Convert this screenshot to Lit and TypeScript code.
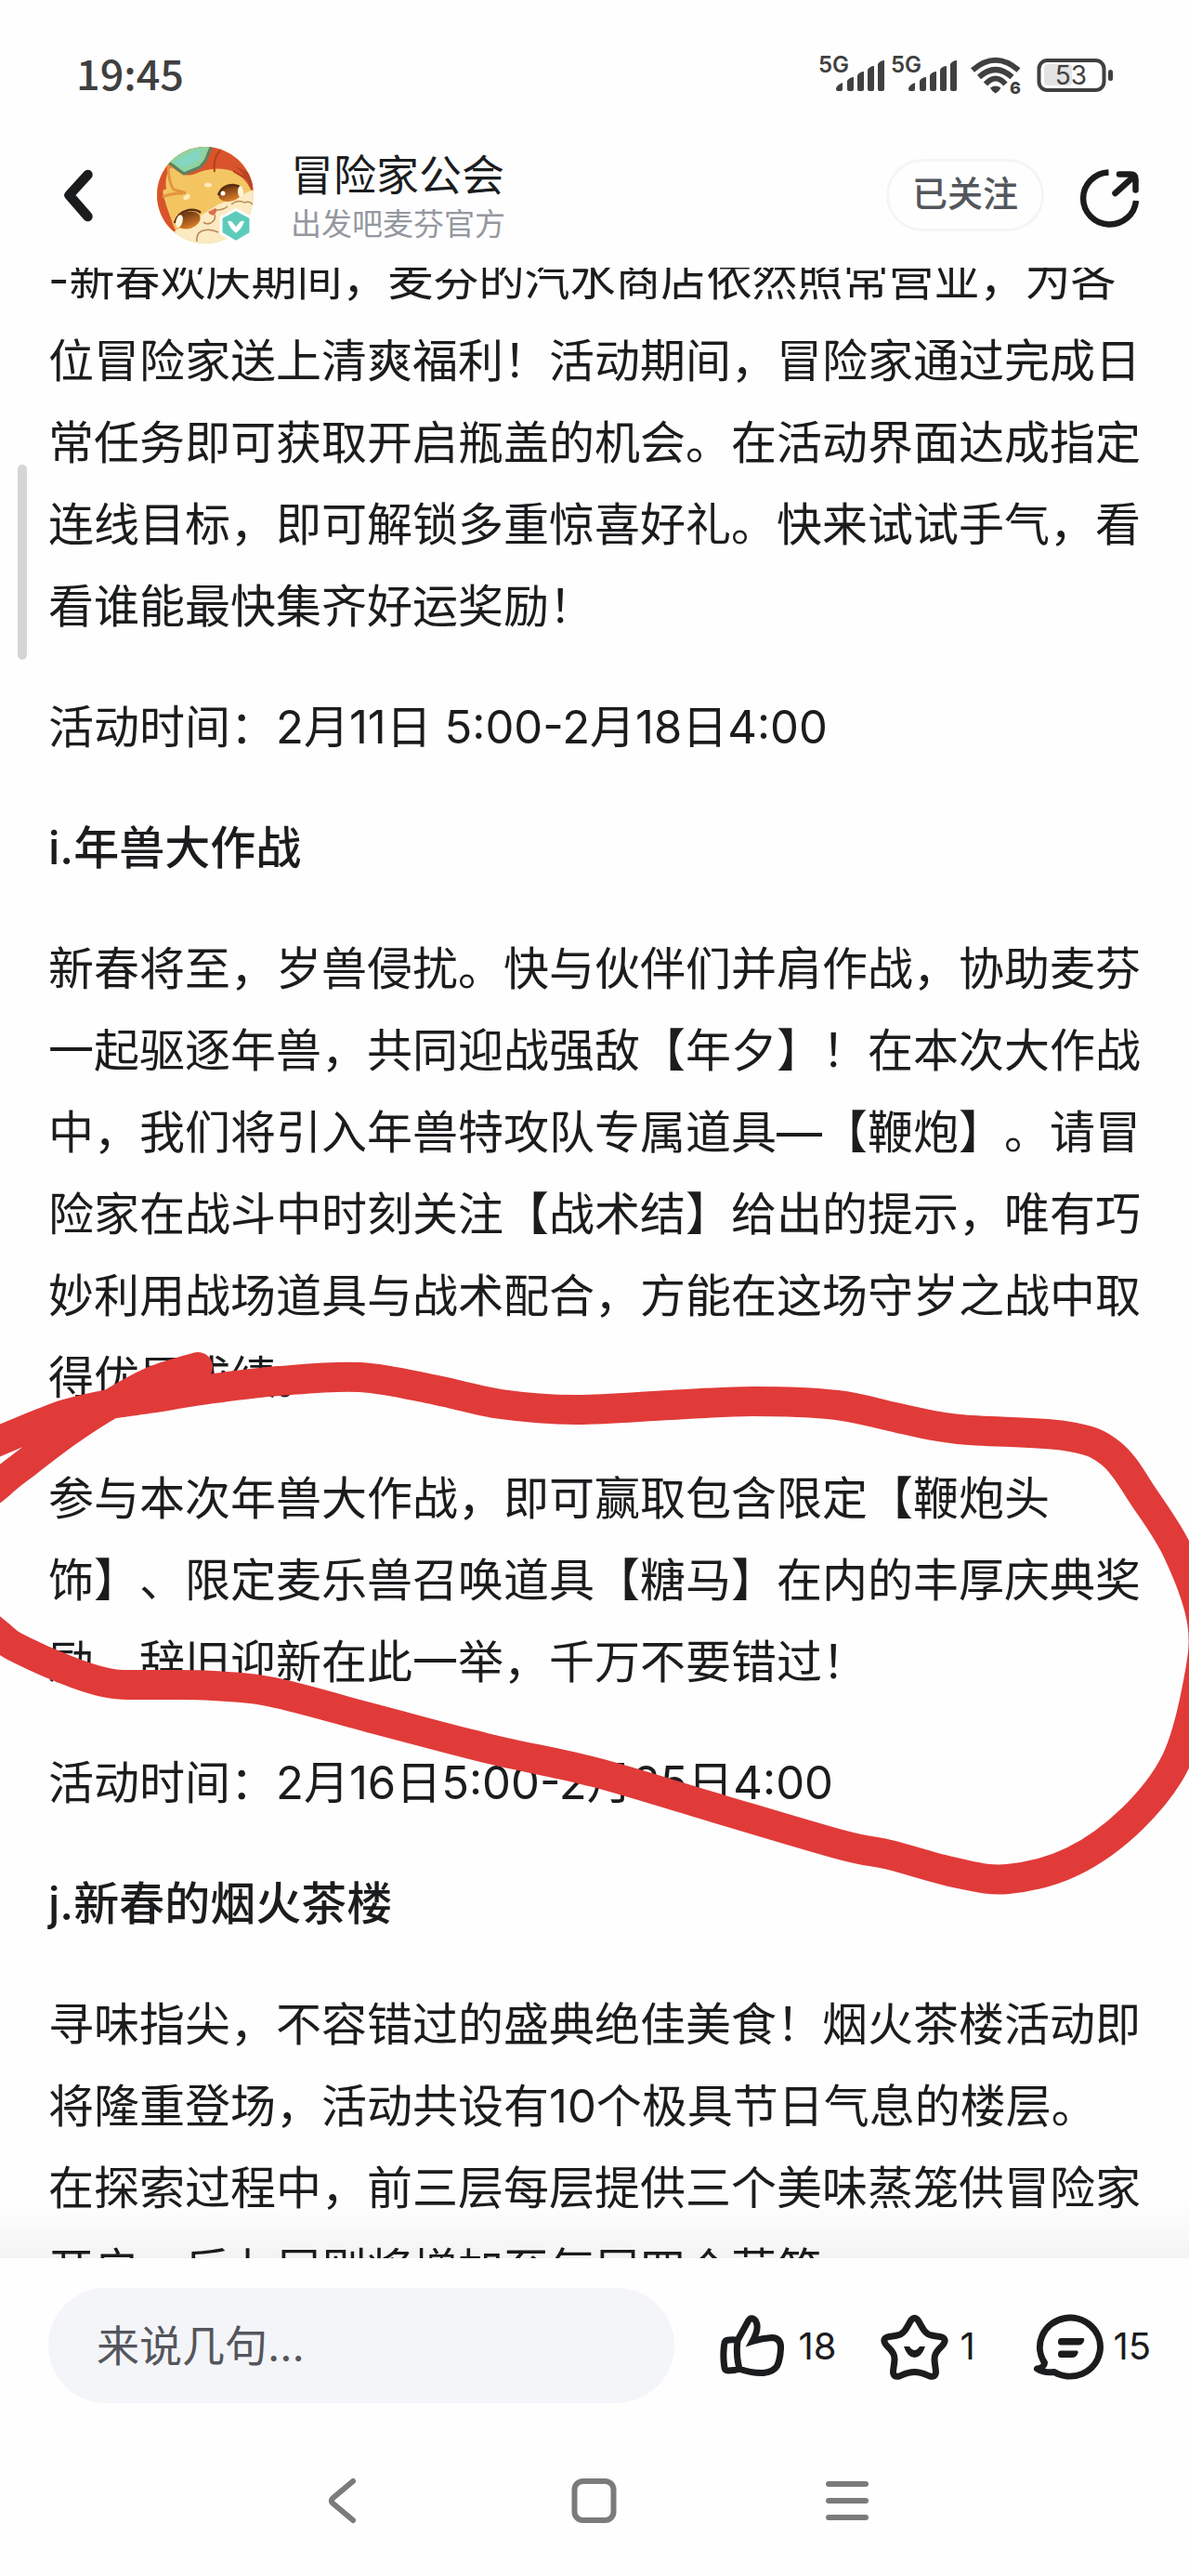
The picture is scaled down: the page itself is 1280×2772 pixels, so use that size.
import { LitElement, html, css, svg } from "lit";
import { customElement, property } from "lit/decorators.js";

interface Block {
  kind: "text" | "title";
  text: string;
}

const ARTICLE: Block[] = [
  {
    kind: "text",
    text: "-新春欢庆期间，麦芬的汽水商店依然照常营业，为各位冒险家送上清爽福利！活动期间，冒险家通过完成日常任务即可获取开启瓶盖的机会。在活动界面达成指定连线目标，即可解锁多重惊喜好礼。快来试试手气，看看谁能最快集齐好运奖励！",
  },
  { kind: "text", text: "活动时间：2月11日 5:00-2月18日4:00" },
  { kind: "title", text: "i.年兽大作战" },
  {
    kind: "text",
    text: "新春将至，岁兽侵扰。快与伙伴们并肩作战，协助麦芬一起驱逐年兽，共同迎战强敌【年夕】！在本次大作战中，我们将引入年兽特攻队专属道具—【鞭炮】。请冒险家在战斗中时刻关注【战术结】给出的提示，唯有巧妙利用战场道具与战术配合，方能在这场守岁之战中取得优异成绩。",
  },
  {
    kind: "text",
    text: "参与本次年兽大作战，即可赢取包含限定【鞭炮头饰】、限定麦乐兽召唤道具【糖马】在内的丰厚庆典奖励。辞旧迎新在此一举，千万不要错过！",
  },
  { kind: "text", text: "活动时间：2月16日5:00-2月25日4:00" },
  { kind: "title", text: "j.新春的烟火茶楼" },
  {
    kind: "text",
    text: "寻味指尖，不容错过的盛典绝佳美食！烟火茶楼活动即将隆重登场，活动共设有10个极具节日气息的楼层。在探索过程中，前三层每层提供三个美味蒸笼供冒险家开启，后七层则将增加至每层四个蒸笼。",
  },
];

type Point = [number, number];

/* Centre line of the hand-drawn marker loop. */
const MARKER: Point[] = [
  [213, 1471], [163, 1487], [112, 1515], [71, 1542], [30, 1573], [0, 1597], [-40, 1640],
  [-30, 1725], [0, 1760], [24, 1776], [82, 1801], [122, 1812], [170, 1813],
  [229, 1814], [294, 1821], [408, 1851], [527, 1882], [640, 1907], [762, 1943],
  [905, 1985], [958, 1996], [1028, 2015], [1085, 2022], [1155, 2003], [1219, 1957],
  [1266, 1895], [1290, 1810], [1294, 1745], [1268, 1670], [1232, 1612], [1196, 1564],
  [1146, 1545], [1032, 1538], [967, 1526], [901, 1512], [811, 1508], [722, 1512],
  [620, 1517], [539, 1511], [470, 1496], [388, 1482], [300, 1486], [231, 1494],
  [160, 1505], [113, 1512], [74, 1521], [46, 1531], [0, 1550], [-35, 1566],
];

/* Smooths a list of points into cubic segments. */
function smooth(points: Point[]): string {
  let d = `M${points[0][0]} ${points[0][1]}`;
  for (let i = 0; i < points.length - 1; i++) {
    const a = points[Math.max(i - 1, 0)];
    const b = points[i];
    const c = points[i + 1];
    const e = points[Math.min(i + 2, points.length - 1)];
    d += ` C${b[0] + (c[0] - a[0]) / 6} ${b[1] + (c[1] - a[1]) / 6} ${c[0] - (e[0] - b[0]) / 6} ${c[1] - (e[1] - b[1]) / 6} ${c[0]} ${c[1]}`;
  }
  return d;
}

const signal = html`<svg width="70" height="52" viewBox="0 0 70 52" aria-hidden="true">
  <text class="net" x="-1" y="23">5G</text>
  <path
    fill="#404040"
    d="M18 40c1-3 4-5 7-6v7q0 2-2 2h-3q-2 0-2-2zM30 32c1-2 4-4 7-4v13q0 2-2 2h-3q-2 0-2-2zM41 26c1-2 4-4 7-4v19q0 2-2 2h-3q-2 0-2-2zM52 20c1-2 4-4 7-4v25q0 2-2 2h-3q-2 0-2-2zM63 14c1-2 4-4 7-4v31q0 2-2 2h-3q-2 0-2-2z"
  />
</svg>`;

@customElement("status-bar")
class StatusBar extends LitElement {
  static styles = css`
    :host {
      display: flex;
      align-items: center;
      justify-content: space-between;
      box-sizing: border-box;
      height: 132px;
      padding: 30px 82px 0;
      color: #404040;
    }
    .time {
      padding-bottom: 6px;
      font-size: 45px;
      line-height: 52px;
      font-weight: 500;
      font-family: "Noto Sans CJK SC", sans-serif;
    }
    .icons {
      display: flex;
      align-items: center;
      gap: 8px;
    }
    svg {
      display: block;
      overflow: visible;
    }
    .net {
      font: 600 24px Inter, sans-serif;
      fill: #404040;
    }
    .gen {
      font: 800 18px Inter, sans-serif;
      fill: #404040;
    }
    .charge {
      font: 400 28px Inter, sans-serif;
      fill: #404040;
      text-anchor: middle;
    }
  `;
  render() {
    return html`
      <span class="time">19:45</span>
      <div class="icons">
        ${signal} ${signal}
        <svg width="70" height="52" viewBox="-2 0 70 52" aria-hidden="true">
          <g fill="none" stroke="#404040" stroke-width="6">
            <path d="M7 20.500Q31.700 -1 56.500 20.500" />
            <path d="M14 28Q31.700 12 49.500 28" />
            <path d="M21 35.500Q31.700 23.500 42.500 35.500" />
          </g>
          <path fill="#404040" d="M26 39.500Q31.700 35.500 37.500 39.500Q36 43 31.700 45.500Q27.500 43 26 39.500z" />
          <text class="gen" x="47" y="46">6</text>
        </svg>
        <svg width="82" height="52" viewBox="0 0 82 52" aria-hidden="true">
          <rect x="8" y="14" width="30" height="23" rx="4" fill="#e3e3e3" />
          <rect x="2.500" y="10" width="70" height="32" rx="9" fill="none" stroke="#404040" stroke-width="4" />
          <rect x="77" y="20" width="5" height="12" rx="2.500" fill="#404040" />
          <text class="charge" x="37" y="36">53</text>
        </svg>
      </div>
    `;
  }
}

@customElement("author-bar")
class AuthorBar extends LitElement {
  static styles = css`
    :host {
      display: flex;
      align-items: center;
      box-sizing: border-box;
      height: 156px;
      padding: 0 52px;
    }
    button {
      display: block;
      padding: 0;
      border: 0;
      background: none;
      font-family: inherit;
      cursor: pointer;
    }
    svg {
      display: block;
    }
    .avatar {
      margin: 0 40px 0 53px;
    }
    .who {
      flex: 1;
      min-width: 0;
      padding-top: 2px;
    }
    .name {
      margin: 0;
      font-size: 46px;
      line-height: 60px;
      font-weight: 400;
      color: #1b1c1e;
    }
    .owner {
      margin: 0;
      font-size: 33px;
      line-height: 46px;
      color: #94989f;
    }
    .follow {
      height: 78px;
      padding: 0 25px 4px;
      margin-right: 36px;
      border: 3px solid #f3f5f7;
      border-radius: 39px;
      font-size: 38px;
      line-height: 1;
      font-weight: 500;
      color: #54565d;
    }
  `;
  render() {
    return html`
      <button aria-label="返回">
        <svg width="64" height="64" viewBox="0 0 64 64">
          <path d="M42.500 10L22.500 32L42.500 55" fill="none" stroke="#1b1c1e" stroke-width="10.500" stroke-linecap="round" stroke-linejoin="round" />
        </svg>
      </button>
      <svg class="avatar" width="104" height="104" viewBox="0 0 104 104" aria-hidden="true">
        <defs>
          <clipPath id="disc"><circle cx="52" cy="52" r="52" /></clipPath>
          <linearGradient id="iris" x1="0" y1="0" x2="0" y2="1">
            <stop offset="0" stop-color="#6b3312" />
            <stop offset="1" stop-color="#dc8128" />
          </linearGradient>
        </defs>
        <g clip-path="url(#disc)">
          <rect width="104" height="104" fill="#f3c663" />
          <path d="M0 0H104V52Q98 36 84 27Q66 20 46 27Q32 34 22 27L14 22Q8 32 10 46Q4 44 8 56Q12 72 22 92L0 104z" fill="#d9542b" />
          <path d="M62 27Q60 12 68 4M82 26Q88 30 104 38V20Q92 8 76 2" fill="none" stroke="#b53f20" stroke-width="2" />
          <path d="M82 20Q94 26 102 48L104 30z" fill="#b84424" />
          <path d="M12 18Q24 30 28 50Q18 52 8 50Q14 55 14 60Q12 76 22 94L52 70V34Q34 36 22 26Q16 22 12 18z" fill="#f4c461" />
          <path d="M12 18Q12 38 18 46Q26 48 31 50M6 54Q14 50 28 50" fill="none" stroke="#e39540" stroke-width="3" />
          <path d="M11 16L20 -2H59L52 15L46 22L29 29L17 20z" fill="#8fd3a2" stroke="#5d8060" stroke-width="3" />
          <path d="M18 16L47 2L45 14L29 22z" fill="#82d6c3" />
          <path d="M104 46L66 62L50 72L14 94V104H104z" fill="#fbeac2" />
          <ellipse cx="79" cy="50" rx="13" ry="8.500" transform="rotate(-18 79 50)" fill="url(#iris)" />
          <path d="M66 52Q70 41 82 41Q90 42 92 46" fill="none" stroke="#5c2d12" stroke-width="2.500" />
          <ellipse cx="90" cy="48" rx="3" ry="6" fill="#fff6dd" />
          <circle cx="71" cy="50" r="2.500" fill="#fff" />
          <ellipse cx="34" cy="79" rx="13" ry="9" transform="rotate(-20 34 79)" fill="url(#iris)" />
          <path d="M19 82Q22 71 34 68Q43 67 47 71" fill="none" stroke="#5c2d12" stroke-width="2.500" />
          <ellipse cx="24" cy="80" rx="3.500" ry="7" transform="rotate(15 24 80)" fill="#fff6dd" />
          <ellipse cx="55" cy="41" rx="4" ry="2.500" fill="#fdeab8" />
          <ellipse cx="32" cy="54" rx="4" ry="2.500" transform="rotate(-30 32 54)" fill="#fdeab8" />
          <path d="M55 70L63 66Q66 68 62 73Q58 75 55 70z" fill="#d9714b" />
          <path d="M62 73Q64 78 58 82Q52 84 50 81M64 68Q72 68 76 64M43 102Q42 92 50 90Q58 88 66 92M80 62Q88 56 94 60Q100 58 103 62" fill="none" stroke="#b98653" stroke-width="1.500" />
        </g>
        <path d="M85 67.500L101 76V93L85 102.500L69 93V76z" fill="#5dcbbb" stroke="#fff" stroke-width="3" stroke-linejoin="round" />
        <path d="M76 80Q79 79 81 81L85 86L89 81Q91 79 94 80Q92 87 86 92Q85 93 84 92Q78 87 76 80z" fill="#fff" />
      </svg>
      <div class="who">
        <h1 class="name">冒险家公会</h1>
        <p class="owner">出发吧麦芬官方</p>
      </div>
      <button class="follow">已关注</button>
      <button aria-label="分享">
        <svg width="68" height="80" viewBox="10 0 68 80">
          <g fill="none" stroke="#1b1c1e" stroke-width="6.500">
            <path d="M43.500 15.500A28.500 28 0 1 0 73 46" />
            <path d="M50.500 38L71 19.500M55 17.500H67Q72.500 17.500 72.500 23V34.500" stroke-linecap="round" />
          </g>
        </svg>
      </button>
    `;
  }
}

@customElement("post-article")
class PostArticle extends LitElement {
  static styles = css`
    :host {
      display: block;
      position: relative;
      overflow: hidden;
    }
    .body {
      display: flex;
      flex-direction: column;
      gap: 42px;
      margin-top: -31px;
      padding: 0 52px;
    }
    .text,
    .title {
      margin: 0;
      font-size: 49px;
      line-height: 88px;
      font-weight: 400;
      color: #1b1c1e;
      text-spacing-trim: space-all;
      overflow-wrap: anywhere;
    }
    .title {
      font-weight: 500;
    }
    .thumb {
      position: absolute;
      left: 19px;
      top: 212px;
      width: 10px;
      height: 210px;
      border-radius: 5px;
      background: #d5d5d5;
    }
    .fade {
      position: absolute;
      left: 0;
      right: 0;
      bottom: 0;
      height: 60px;
      background: linear-gradient(rgba(0, 0, 0, 0), rgba(0, 0, 0, 0.045));
    }
  `;
  render() {
    return html`
      <div class="body">
        ${ARTICLE.map((b) =>
          b.kind === "title"
            ? html`<h2 class="title">${b.text}</h2>`
            : html`<p class="text">${b.text}</p>`
        )}
      </div>
      <div class="thumb"></div>
      <div class="fade"></div>
    `;
  }
}

const ICONS = {
  like: svg`<path d="M24.500 32.500Q17 31 11 32.500Q9 33 8.500 38Q7 50 9 62Q9.500 65 13 65Q20 65 25 63M23 33Q21 48 25 63M23 32.500L34.500 11.500Q38 6 42.500 11.500Q47 19 39 33.500Q50 30 60 29.500Q70 30 69.500 41Q69 53 65.500 60Q62 66 51 67.500Q38 68 25 63" />`,
  star: svg`<path d="M35 12Q39.500 5 44 12C48 19 51 26 58 27C62 28 66 28 69 29Q74 31 71 36C68 41 61 44 61 52C61 58 62.500 62 62.500 67Q62 72.500 56 71C51 69 47 66.500 39.500 66.500C32 66.500 28 69 23 71Q17 72.500 16.500 67C16.500 62 18 58 18 52C18 44 11 41 8 36Q5 31 10 29C13 28 17 28 21 27C28 26 31 19 35 12Z" /><path d="M28 39H34Q39.500 47 45 39H51Q47 51 39.500 51Q32 51 28 39z" fill="#1b1c1e" stroke="none" />`,
  comment: svg`<path d="M14.500 56.500A32.500 31.500 0 1 1 25 66.500Q15 68 6.500 63Q14 62 14.500 56.500z" stroke-linejoin="round" /><path d="M32 30H55.500Q58 30 57 33Q55.500 37.500 51 37.500H32Q29 37.500 29 34Q29 30 32 30zM32 43.500H49Q51 43.500 50.500 46Q49 51 44 51H32Q29 51 29 47.500Q29 43.500 32 43.500z" fill="#1b1c1e" stroke="none" />`,
};

@customElement("post-action")
class PostAction extends LitElement {
  @property() icon: keyof typeof ICONS = "like";
  @property() label = "";
  @property({ type: Number }) count = 0;

  static styles = css`
    .action {
      display: flex;
      align-items: center;
      gap: 8px;
      min-width: 120px;
      padding: 0;
      border: 0;
      background: none;
      font: 400 40px Inter, "Noto Sans CJK SC", sans-serif;
      color: #1b1c1e;
      cursor: pointer;
    }
    svg {
      flex: none;
    }
  `;
  render() {
    return html`<button class="action" aria-label="${this.label} ${this.count}">
      <svg width="80" height="76" viewBox="0 0 80 76" fill="none" stroke="#1b1c1e" stroke-width="7">
        ${ICONS[this.icon]}
      </svg>
      <span>${this.count}</span>
    </button>`;
  }
}

@customElement("reply-bar")
class ReplyBar extends LitElement {
  static styles = css`
    :host {
      display: flex;
      align-items: center;
      gap: 45px;
      box-sizing: border-box;
      padding: 32px 41px 32px 52px;
    }
    .reply {
      flex: 1;
      min-width: 0;
      box-sizing: border-box;
      height: 124px;
      padding: 0 52px;
      border: 0;
      border-radius: 62px;
      background: #f4f5f8;
      font: 400 46px Inter, "Noto Sans CJK SC", sans-serif;
      color: #1b1c1e;
    }
    .reply::placeholder {
      color: #54565d;
      opacity: 1;
    }
  `;
  render() {
    return html`
      <input class="reply" type="text" placeholder="来说几句..." aria-label="来说几句" />
      <post-action icon="like" label="点赞" .count=${18}></post-action>
      <post-action icon="star" label="收藏" .count=${1}></post-action>
      <post-action icon="comment" label="评论" .count=${15}></post-action>
    `;
  }
}

@customElement("system-nav")
class SystemNav extends LitElement {
  static styles = css`
    :host {
      display: flex;
      align-items: center;
      justify-content: center;
      gap: 208px;
      height: 146px;
      padding-bottom: 8px;
    }
    button {
      display: block;
      padding: 0;
      border: 0;
      background: none;
      cursor: pointer;
    }
    svg {
      display: block;
      fill: none;
      stroke: #7b7b7b;
      stroke-width: 6px;
      stroke-linecap: round;
      stroke-linejoin: round;
    }
  `;
  render() {
    return html`
      <button aria-label="后退">
        <svg width="64" height="64" viewBox="0 0 64 64"><path d="M44 11L22.500 29Q19 32 22.500 35L44 53" /></svg>
      </button>
      <button aria-label="主屏幕">
        <svg width="64" height="64" viewBox="0 0 64 64"><rect x="10.500" y="11" width="42" height="42" rx="9" /></svg>
      </button>
      <button aria-label="最近任务">
        <svg width="64" height="64" viewBox="0 0 64 64"><path d="M12 14H52M12 32H52M12 50H52" /></svg>
      </button>
    `;
  }
}

@customElement("app-root")
class AppRoot extends LitElement {
  static styles = css`
    :host {
      display: flex;
      flex-direction: column;
      position: relative;
      height: 100vh;
      overflow: hidden;
      background: #fefefe;
      font-family: Inter, "Noto Sans CJK SC", sans-serif;
    }
    .article {
      flex: 1;
      min-height: 0;
    }
    .marker {
      position: absolute;
      left: 0;
      top: 0;
      width: 100%;
      pointer-events: none;
    }
  `;
  render() {
    return html`
      <status-bar></status-bar>
      <author-bar></author-bar>
      <post-article class="article" lang="zh-CN"></post-article>
      <reply-bar></reply-bar>
      <system-nav></system-nav>
      <svg class="marker" viewBox="0 0 1280 2772" aria-hidden="true">
        <path d=${smooth(MARKER)} fill="none" stroke="#e03b39" stroke-width="32" stroke-linecap="round" stroke-linejoin="round" />
      </svg>
    `;
  }
}
